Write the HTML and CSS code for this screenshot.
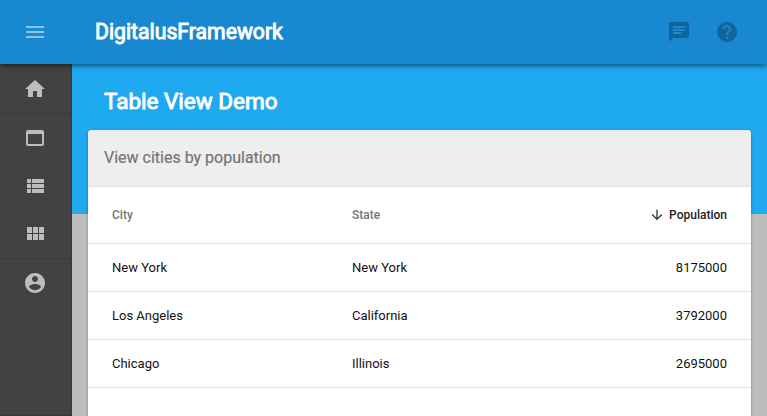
FILE: index.html
```
<!DOCTYPE html>
<html lang="en">
<head>
<meta charset="utf-8">
<title>DigitalusFramework</title>
<link rel="stylesheet" href="styles.css">
</head>
<body>
<header class="toolbar">
  <svg class="icon menu" viewBox="0 0 24 24"><path d="M3 18h18v-2H3v2zm0-5h18v-2H3v2zm0-7v2h18V6H3z"/></svg>
  <h1 class="brand">DigitalusFramework</h1>
  <div class="actions">
    <svg class="icon" viewBox="0 0 24 24"><path d="M20 2H4c-1.1 0-1.99.9-1.99 2L2 22l4-4h14c1.1 0 2-.9 2-2V4c0-1.1-.9-2-2-2zM6 9h12v2H6V9zm8 5H6v-2h8v2zm4-6H6V6h12v2z"/></svg>
    <svg class="icon" viewBox="0 0 24 24"><path d="M12 2C6.48 2 2 6.48 2 12s4.48 10 10 10 10-4.480 10-10S17.520 2 12 2zm1 17h-2v-2h2v2zm2.070-7.750l-.9.920C13.450 12.900 13 13.500 13 15h-2v-.5c0-1.100.450-2.100 1.170-2.830l1.240-1.260c.370-.360.590-.860.590-1.410 0-1.100-.9-2-2-2s-2 .9-2 2H8c0-2.210 1.790-4 4-4s4 1.790 4 4c0 .880-.360 1.680-.930 2.250z"/></svg>
  </div>
</header>
<div class="layout">
  <nav class="sidebar">
    <div class="group">
      <a class="item"><svg class="icon" viewBox="0 0 24 24"><path d="M10 20v-6h4v6h5v-8h3L12 3 2 12h3v8z"/></svg></a>
    </div>
    <div class="group">
      <a class="item"><svg class="icon" viewBox="0 0 24 24"><path d="M19 4H5c-1.110 0-2 .9-2 2v12c0 1.100.890 2 2 2h14c1.100 0 2-.9 2-2V6c0-1.100-.9-2-2-2zm0 14H5V8h14v10z"/></svg></a>
      <a class="item"><svg class="icon" viewBox="0 0 24 24"><path d="M4 14h4v-4H4v4zm0 5h4v-4H4v4zM4 9h4V5H4v4zm5 5h12v-4H9v4zm0 5h12v-4H9v4zM9 5v4h12V5H9z"/></svg></a>
      <a class="item"><svg class="icon" viewBox="0 0 24 24"><path d="M4 11h5V5H4v6zm0 7h5v-6H4v6zm6 0h5v-6h-5v6zm6 0h5v-6h-5v6zm-6-7h5V5h-5v6zm6-6v6h5V5h-5z"/></svg></a>
    </div>
    <div class="group last">
      <a class="item"><svg class="icon" viewBox="0 0 24 24"><path d="M12 2C6.480 2 2 6.480 2 12s4.480 10 10 10 10-4.480 10-10S17.520 2 12 2zm0 3c1.660 0 3 1.340 3 3s-1.340 3-3 3-3-1.340-3-3 1.340-3 3-3zm0 14.200c-2.500 0-4.710-1.280-6-3.220.030-1.990 4-3.080 6-3.080 1.990 0 5.970 1.090 6 3.080-1.290 1.940-3.500 3.220-6 3.220z"/></svg></a>
    </div>
  </nav>
  <main class="content">
    <h2 class="title">Table View Demo</h2>
    <section class="card">
      <div class="card-head">View cities by population</div>
      <div class="row head"><span>City</span><span>State</span><span class="num sorted"><svg class="arrow" viewBox="0 0 24 24"><path d="M20 12l-1.410-1.410L13 16.170V4h-2v12.170l-5.580-5.590L4 12l8 8 8-8z"/></svg>Population</span></div>
      <div class="row"><span>New York</span><span>New York</span><span class="num">8175000</span></div>
      <div class="row"><span>Los Angeles</span><span>California</span><span class="num">3792000</span></div>
      <div class="row"><span>Chicago</span><span>Illinois</span><span class="num">2695000</span></div>
    </section>
  </main>
</div>
</body>
</html>
```
FILE: styles.css
```
* { box-sizing: border-box; }
body {
  margin: 0;
  height: 416px;
  overflow: hidden;
  display: flex;
  flex-direction: column;
  background: #bdbdbd;
  font-family: Roboto, sans-serif;
  color: #121212;
}
.icon { display: block; width: 24px; height: 24px; fill: currentColor; }
.toolbar {
  position: relative;
  z-index: 2;
  flex: none;
  height: 64px;
  display: flex;
  align-items: center;
  padding: 0 28px 0 23px;
  background: #1889d0;
  box-shadow: 0 2px 5px rgba(0, 0, 0, .5);
}
.menu { color: rgba(255, 255, 255, .5); }
.brand {
  margin: 0 0 0 48px;
  flex: 1;
  font-size: 21.2px;
  line-height: 24px;
  font-weight: 400;
  color: #fff;
  -webkit-text-stroke: .9px #fff;
}
.actions { display: flex; gap: 24px; color: rgba(0, 0, 0, .26); }
.layout { flex: 1; display: flex; min-height: 0; }
.sidebar {
  width: 72px;
  padding-top: 1px;
  background: #424242;
  border-right: 1px solid #393939;
  color: #bdbdbd;
}
.group { border-bottom: 1px solid #393939; }
.last { height: 157px; }
.item { display: flex; height: 48px; align-items: center; padding-left: 23px; }
.content {
  flex: 1;
  display: flex;
  flex-direction: column;
  padding: 0 16px;
  background: linear-gradient(#1fa9f1 150px, #bdbdbd 150px);
}
.title {
  margin: 0;
  flex: none;
  height: 66px;
  padding: 25px 16px 0;
  font-size: 22.5px;
  line-height: 25px;
  font-weight: 400;
  color: #fff;
  -webkit-text-stroke: .9px #fff;
}
.card {
  flex: 1;
  border-radius: 4px 4px 0 0;
  overflow: hidden;
  background: #fff;
  box-shadow: 0 1px 3px rgba(0, 0, 0, .35);
}
.card-head {
  height: 57px;
  padding: 0 16px;
  background: #eee;
  border-bottom: 1px solid #e0e0e0;
  font-size: 16px;
  line-height: 55px;
  color: #757575;
  -webkit-text-stroke: .2px #757575;
}
.row {
  height: 48px;
  display: grid;
  grid-template-columns: 240px 1fr 160px;
  align-items: center;
  padding: 0 24px;
  border-bottom: 1px solid #e0e0e0;
  font-size: 13px;
}
.head { height: 57px; font-size: 12px; font-weight: 500; color: #757575; }
.num { text-align: right; }
.sorted { display: flex; justify-content: flex-end; align-items: center; color: #212121; }
.arrow { width: 16px; height: 16px; margin-right: 4px; fill: #333; }
```
